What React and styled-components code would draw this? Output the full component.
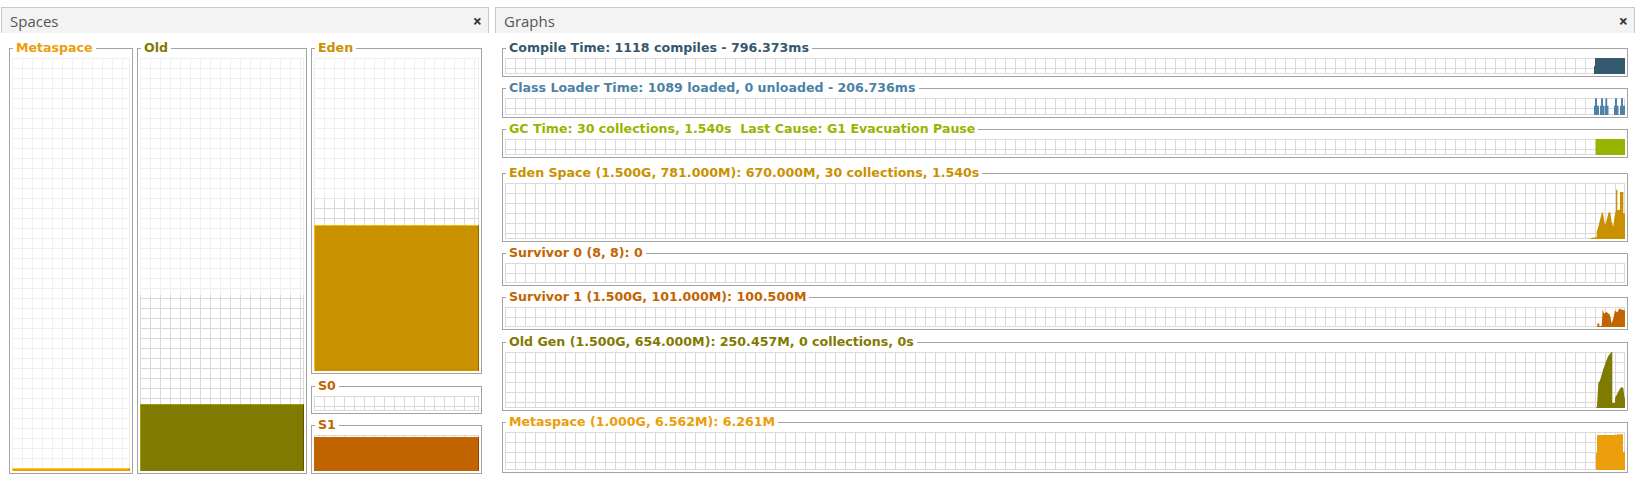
import styled, { createGlobalStyle } from "styled-components"

const GlobalStyle = createGlobalStyle`
  html, body {
    margin: 0;
    background: #ffffff;
  }
  body {
    font-family: "Open Sans", "DejaVu Sans", sans-serif;
  }
`

const Page = styled.div`
  display: flex;
  gap: 6px;
  height: 482px;
  padding: 7px 0 0 1px;
  box-sizing: border-box;
  overflow: hidden;
`

const Panel = styled.section`
  display: flex;
  flex-direction: column;
  width: ${p => (p.$width ? p.$width + "px" : "auto")};
  flex: ${p => (p.$width ? "none" : "1")};
  min-width: 0;
`

const PanelHeader = styled.header`
  display: flex;
  align-items: center;
  justify-content: space-between;
  height: 26px;
  box-sizing: border-box;
  padding: 0 6px 0 8px;
  background: #f3f3f3;
  border: 1px solid #c9c9c9;
  border-bottom: none;
  font-size: 15px;
  color: #555555;
`

const Close = styled.span`
  font-size: 16px;
  font-weight: 700;
  line-height: 1;
  color: #333333;
`

const SpacesBody = styled.div`
  display: flex;
  gap: 4px;
  padding: 7px 0 0 8px;
`

const Column = styled.div`
  display: flex;
  flex-direction: column;
`

const GraphsBody = styled.div`
  display: flex;
  flex-direction: column;
  padding: 7px 7px 0;
`

const Group = styled.fieldset`
  margin: ${p => p.$mt || 0}px 0 0;
  padding: 0 2px 2px;
  border: 1px solid #a3a3a3;
  min-width: 0;
  box-sizing: border-box;
  width: ${p => (p.$w ? p.$w + "px" : "auto")};
`

const Legend = styled.legend`
  margin-left: 1px;
  padding: 0 3px;
  font-family: "DejaVu Sans", sans-serif;
  font-size: 12.6px;
  font-weight: 700;
  line-height: 16px;
  white-space: pre;
  color: ${p => p.$color};
`

const SpaceChart = styled.div`
  position: relative;
  margin-top: 2px;
  height: ${p => p.$h}px;
`

const GridLayer = styled.div`
  position: absolute;
  inset: 0;
  box-sizing: border-box;
  border-right: 1px solid ${p => p.$line};
  border-bottom: 1px solid ${p => p.$line};
  background-image: linear-gradient(to right, ${p => p.$line} 1px, transparent 1px),
    linear-gradient(to bottom, ${p => p.$line} 1px, transparent 1px);
  background-size: 10px 10px;
`

const UsedFill = styled.div`
  position: absolute;
  left: 0;
  right: 0;
  bottom: 0;
  box-sizing: border-box;
  background: ${p => p.$fill};
  border-top: 1px solid ${p => p.$hi};
  border-left: 1px solid ${p => p.$hi};
  border-right: 1px solid ${p => p.$lo};
`

const GraphChart = styled.div`
  position: relative;
  margin-top: 2px;
  height: ${p => p.$h}px;
  box-sizing: border-box;
  border-right: 1px solid #dadada;
  border-bottom: 1px solid #dadada;
  background-image: linear-gradient(to right, #dadada 1px, transparent 1px),
    linear-gradient(to bottom, #dadada 1px, transparent 1px);
  background-size: 10px 10px;
`

const Trace = styled.svg`
  position: absolute;
  top: 0;
  right: -1px;
  bottom: -1px;
  width: 41px;
  height: calc(100% + 1px);
`

const LIGHT = "#efefef"
const DARK = "#d9d9d9"

function Space({ label, color, w, h, mt, committed, used, fill, hi, lo }) {
  return (
    <Group $w={w} $mt={mt}>
      <Legend $color={color}>{label}</Legend>
      <SpaceChart $h={h}>
        <GridLayer $line={LIGHT} />
        <GridLayer $line={DARK} style={{ clipPath: `inset(${100 - committed}% 0 0 0)` }} />
        {used > 0 && <UsedFill $fill={fill} $hi={hi} $lo={lo} style={{ height: `${used}%` }} />}
      </SpaceChart>
    </Group>
  )
}

const spike = (a, p1, p2, b) =>
  `${a},100 ${a},45 ${p1},45 ${p1},1 ${p2},1 ${p2},45 ${b},45 ${b},100`

const graphs = [
  {
    label: "Compile Time: 1118 compiles - 796.373ms",
    color: "#34586e",
    h: 16,
    mt: 0,
    shapes: ["10,100 10,50 11,50 11,0 41,0 41,100"],
  },
  {
    label: "Class Loader Time: 1089 loaded, 0 unloaded - 206.736ms",
    color: "#4b82a6",
    h: 17,
    mt: 3,
    shapes: [
      spike(10, 11, 13, 15),
      spike(16, 17, 19, 20.2),
      spike(20.6, 21.5, 23.2, 24.5),
      spike(30, 31, 33, 34.5),
      spike(36, 37, 39, 41),
    ],
  },
  {
    label: "GC Time: 30 collections, 1.540s  Last Cause: G1 Evacuation Pause",
    color: "#99b400",
    h: 16,
    mt: 3,
    shapes: ["11.7,100 11.7,0 41,0 41,100"],
  },
  {
    label: "Eden Space (1.500G, 781.000M): 670.000M, 30 collections, 1.540s",
    color: "#c99100",
    h: 56,
    mt: 7,
    shapes: [
      "6.7,100 6.7,98 12.7,97 12.7,87 14.3,78 16,66 17.5,55 18.3,51 19.3,57 21,75 22.7,66 24.3,54 26,51 27.7,69 29.3,78 30.5,60 32,48 32,12 33.3,12 33.3,48 36,48 36,16 39.3,16 39.3,54 41,54 41,100",
    ],
  },
  {
    label: "Survivor 0 (8, 8): 0",
    color: "#c26400",
    h: 20,
    mt: 3,
    shapes: [],
  },
  {
    label: "Survivor 1 (1.500G, 101.000M): 100.500M",
    color: "#c26400",
    h: 20,
    mt: 3,
    shapes: [
      "13.3,100 13.3,82 15.3,82 15.3,95 17.7,95 18.7,10 20,32 22.7,25 26,40 27.7,82 29.3,57 31,18 33.3,28 35.3,7 37.7,12 41,18 41,100",
    ],
  },
  {
    label: "Old Gen (1.500G, 654.000M): 250.457M, 0 collections, 0s",
    color: "#7f7a00",
    h: 56,
    mt: 4,
    shapes: [
      "12,100 13,97 14.3,56 16,51 19,32 22,17 24,8 26,3 27.5,0 28.3,0 28.3,91 31,91 31,82 34.3,71 37,63 39.3,64 40.5,82 41,82 41,100",
    ],
  },
  {
    label: "Metaspace (1.000G, 6.562M): 6.261M",
    color: "#eb9d0a",
    h: 38,
    mt: 3,
    shapes: ["12,100 12,55 13,55 13,8 33,8 33,6 39,6 39,52 41,52 41,100"],
  },
]

export default function App() {
  return (
    <>
      <GlobalStyle />
      <Page>
        <Panel $width={488}>
          <PanelHeader>
            <span>Spaces</span>
            <Close>×</Close>
          </PanelHeader>
          <SpacesBody>
            <Space
              label="Metaspace"
              color="#eb9f0a"
              w={124}
              h={413}
              committed={0.64}
              used={0.61}
              fill="#eca00b"
              hi="#ffd21a"
              lo="#b87e00"
            />
            <Space
              label="Old"
              color="#7f7a00"
              w={170}
              h={413}
              committed={42.6}
              used={16.3}
              fill="#807a00"
              hi="#a29c00"
              lo="#5c5800"
            />
            <Column>
              <Space
                label="Eden"
                color="#c99100"
                w={171}
                h={313}
                committed={55}
                used={46.6}
                fill="#c99100"
                hi="#f2ba00"
                lo="#8e6600"
              />
              <Space label="S0" color="#c26400" w={171} h={15} mt={4} committed={100} used={0} />
              <Space
                label="S1"
                color="#c26400"
                w={171}
                h={36}
                mt={3}
                committed={100}
                used={95}
                fill="#c16400"
                hi="#c16400"
                lo="#8a4700"
              />
            </Column>
          </SpacesBody>
        </Panel>
        <Panel>
          <PanelHeader>
            <span>Graphs</span>
            <Close>×</Close>
          </PanelHeader>
          <GraphsBody>
            {graphs.map(g => (
              <Group key={g.label} $mt={g.mt}>
                <Legend $color={g.color}>{g.label}</Legend>
                <GraphChart $h={g.h}>
                  {g.shapes.length > 0 && (
                    <Trace viewBox="0 0 41 100" preserveAspectRatio="none">
                      {g.shapes.map((pts, i) => (
                        <polygon key={i} points={pts} fill={g.color} />
                      ))}
                    </Trace>
                  )}
                </GraphChart>
              </Group>
            ))}
          </GraphsBody>
        </Panel>
      </Page>
    </>
  )
}
